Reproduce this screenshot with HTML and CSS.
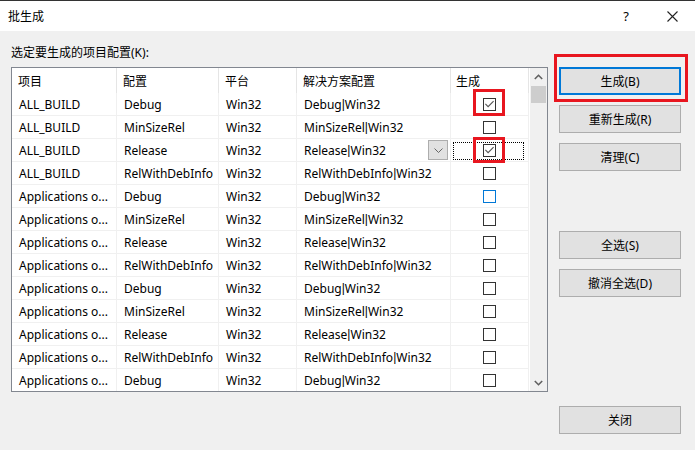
FILE: index.html
```html
<!DOCTYPE html>
<html lang="zh-CN">

<head>
    <meta charset="UTF-8">
    <title>批生成</title>
    <link rel="stylesheet" href="styles.css">
</head>

<body>
    <div class="window">
        <!-- Title bar -->
        <div class="titlebar">
            <span class="title">批生成</span>
            <span class="help">?</span>
            <span class="close">
                <svg width="11" height="11" viewBox="0 0 11 11"><path d="M0.5 0.5 L10.5 10.5 M10.5 0.5 L0.5 10.5" stroke="#222" stroke-width="1.1" fill="none"/></svg>
            </span>
        </div>

        <div class="content">
            <div class="left">
                <div class="label">选定要生成的项目配置(K):</div>

                <div class="listbox">
                    <div class="grid">
                        <div class="row header">
                            <div class="cell c1">项目</div>
                            <div class="cell c2">配置</div>
                            <div class="cell c3">平台</div>
                            <div class="cell c4">解决方案配置</div>
                            <div class="cell c5">生成</div>
                        </div>

                        <div class="row">
                            <div class="cell c1">ALL_BUILD</div>
                            <div class="cell c2">Debug</div>
                            <div class="cell c3">Win32</div>
                            <div class="cell c4">Debug<span class="sep">|</span>Win32</div>
                            <div class="cell c5">
                                <span class="check"><svg width="11" height="11" viewBox="0 0 11 11"><path d="M1.4 4.9 L4.1 7.6 L9.6 2.1" stroke="#555" stroke-width="1.1" fill="none"/></svg></span>
                                <span class="mark mark-a"></span>
                            </div>
                        </div>
                        <div class="row">
                            <div class="cell c1">ALL_BUILD</div>
                            <div class="cell c2">MinSizeRel</div>
                            <div class="cell c3">Win32</div>
                            <div class="cell c4">MinSizeRel<span class="sep">|</span>Win32</div>
                            <div class="cell c5"><span class="check"></span></div>
                        </div>
                        <div class="row">
                            <div class="cell c1">ALL_BUILD</div>
                            <div class="cell c2">Release</div>
                            <div class="cell c3">Win32</div>
                            <div class="cell c4">Release<span class="sep">|</span>Win32
                                <span class="combo">
                                    <svg width="9" height="5" viewBox="0 0 9 5"><path d="M0.5 0.5 L4.5 4.5 L8.5 0.5" stroke="#666" fill="none"/></svg>
                                </span>
                            </div>
                            <div class="cell c5">
                                <span class="focus"></span>
                                <span class="check"><svg width="11" height="11" viewBox="0 0 11 11"><path d="M1.4 4.9 L4.1 7.6 L9.6 2.1" stroke="#555" stroke-width="1.1" fill="none"/></svg></span>
                                <span class="mark mark-b"></span>
                            </div>
                        </div>
                        <div class="row">
                            <div class="cell c1">ALL_BUILD</div>
                            <div class="cell c2">RelWithDebInfo</div>
                            <div class="cell c3">Win32</div>
                            <div class="cell c4">RelWithDebInfo<span class="sep">|</span>Win32</div>
                            <div class="cell c5"><span class="check"></span></div>
                        </div>
                        <div class="row">
                            <div class="cell c1">Applications o...</div>
                            <div class="cell c2">Debug</div>
                            <div class="cell c3">Win32</div>
                            <div class="cell c4">Debug<span class="sep">|</span>Win32</div>
                            <div class="cell c5"><span class="check hover"></span></div>
                        </div>
                        <div class="row">
                            <div class="cell c1">Applications o...</div>
                            <div class="cell c2">MinSizeRel</div>
                            <div class="cell c3">Win32</div>
                            <div class="cell c4">MinSizeRel<span class="sep">|</span>Win32</div>
                            <div class="cell c5"><span class="check"></span></div>
                        </div>
                        <div class="row">
                            <div class="cell c1">Applications o...</div>
                            <div class="cell c2">Release</div>
                            <div class="cell c3">Win32</div>
                            <div class="cell c4">Release<span class="sep">|</span>Win32</div>
                            <div class="cell c5"><span class="check"></span></div>
                        </div>
                        <div class="row">
                            <div class="cell c1">Applications o...</div>
                            <div class="cell c2">RelWithDebInfo</div>
                            <div class="cell c3">Win32</div>
                            <div class="cell c4">RelWithDebInfo<span class="sep">|</span>Win32</div>
                            <div class="cell c5"><span class="check"></span></div>
                        </div>
                        <div class="row">
                            <div class="cell c1">Applications o...</div>
                            <div class="cell c2">Debug</div>
                            <div class="cell c3">Win32</div>
                            <div class="cell c4">Debug<span class="sep">|</span>Win32</div>
                            <div class="cell c5"><span class="check"></span></div>
                        </div>
                        <div class="row">
                            <div class="cell c1">Applications o...</div>
                            <div class="cell c2">MinSizeRel</div>
                            <div class="cell c3">Win32</div>
                            <div class="cell c4">MinSizeRel<span class="sep">|</span>Win32</div>
                            <div class="cell c5"><span class="check"></span></div>
                        </div>
                        <div class="row">
                            <div class="cell c1">Applications o...</div>
                            <div class="cell c2">Release</div>
                            <div class="cell c3">Win32</div>
                            <div class="cell c4">Release<span class="sep">|</span>Win32</div>
                            <div class="cell c5"><span class="check"></span></div>
                        </div>
                        <div class="row">
                            <div class="cell c1">Applications o...</div>
                            <div class="cell c2">RelWithDebInfo</div>
                            <div class="cell c3">Win32</div>
                            <div class="cell c4">RelWithDebInfo<span class="sep">|</span>Win32</div>
                            <div class="cell c5"><span class="check"></span></div>
                        </div>
                        <div class="row">
                            <div class="cell c1">Applications o...</div>
                            <div class="cell c2">Debug</div>
                            <div class="cell c3">Win32</div>
                            <div class="cell c4">Debug<span class="sep">|</span>Win32</div>
                            <div class="cell c5"><span class="check"></span></div>
                        </div>
                    </div>

                    <!-- Vertical scrollbar -->
                    <div class="scrollbar">
                        <div class="arrow">
                            <svg width="9" height="6" viewBox="0 0 9 6"><path d="M0.8 5 L4.5 1.3 L8.2 5" stroke="#606060" stroke-width="1.6" fill="none"/></svg>
                        </div>
                        <div class="thumb"></div>
                        <div class="track"></div>
                        <div class="arrow">
                            <svg width="9" height="6" viewBox="0 0 9 6"><path d="M0.8 1 L4.5 4.7 L8.2 1" stroke="#606060" stroke-width="1.6" fill="none"/></svg>
                        </div>
                    </div>
                </div>
            </div>

            <div class="buttons">
                <div class="btn-group">
                    <div class="mark-btn">
                        <button class="default">生成(B)</button>
                    </div>
                    <button>重新生成(R)</button>
                    <button>清理(C)</button>
                </div>
                <div class="btn-group select-group">
                    <button>全选(S)</button>
                    <button>撤消全选(D)</button>
                </div>
                <button class="close-btn">关闭</button>
            </div>
        </div>
    </div>
</body>

</html>
```

FILE: styles.css
```css
body {
    margin: 0;
    background-color: #f0f0f0;
    font-family: "Noto Sans", "Noto Sans CJK SC", sans-serif;
    font-size: 12px;
    color: #000;
}

.window {
    width: 695px;
    height: 450px;
    border-top: 1px solid #333;
    box-sizing: border-box;
    overflow: hidden;
}

/* Title bar */
.titlebar {
    height: 30px;
    background-color: #fff;
    display: flex;
    align-items: center;
    padding-left: 8px;
}

.titlebar .title {
    flex: 1;
    font-size: 12px;
}

.titlebar .help {
    width: 46px;
    text-align: center;
    font-size: 13px;
}

.titlebar .close {
    width: 46px;
    display: flex;
    justify-content: center;
}

/* Main area */
.content {
    display: flex;
    padding: 0 0 0 11px;
}

.left {
    width: 537px;
}

.label {
    height: 17px;
    margin-top: 13px;
    margin-bottom: 6px;
    line-height: 17px;
}

.listbox {
    display: flex;
    height: 325px;
    border: 1px solid #828790;
    background-color: #fff;
    box-sizing: border-box;
    overflow: hidden;
}

.grid {
    width: 517px;
}

.row {
    display: flex;
    height: 23px;
    border-bottom: 1px solid #f0f0f0;
    box-sizing: border-box;
}

.row.header {
    height: 25px;
    border-bottom: none;
}

.cell {
    display: flex;
    align-items: center;
    padding-left: 7px;
    border-right: 1px solid #f0f0f0;
    box-sizing: border-box;
    white-space: nowrap;
    overflow: hidden;
    position: relative;
}

.header .cell {
    border-right-color: #e5e5e5;
    padding-left: 6px;
}

/* narrower bar glyph, like the dialog font */
.sep {
    font-family: "Liberation Sans", sans-serif;
}

.c1 { width: 105px; }
.c2 { width: 102px; }
.c3 { width: 78px; }
.c4 { width: 154px; padding-right: 2px; }
.c5 { width: 78px; justify-content: center; padding-left: 0; overflow: visible; }

.header .c5 {
    justify-content: flex-start;
    padding-left: 5px;
}

.combo {
    margin-left: auto;
    width: 18px;
    height: 18px;
    background-color: #e1e1e1;
    border: 1px solid #adadad;
    display: flex;
    align-items: center;
    justify-content: center;
}

.check {
    width: 13px;
    height: 13px;
    border: 1px solid #333;
    box-sizing: border-box;
    background-color: #fff;
    display: flex;
    margin-top: 1px;
}

.check.hover {
    border-color: #0078d7;
}

/* Focus rectangle */
.focus {
    position: absolute;
    left: 2px;
    top: 3px;
    width: 71px;
    height: 18px;
    border: 1px dotted #000;
    box-sizing: border-box;
}

/* Red annotation boxes */
.mark {
    position: absolute;
    left: 22px;
    width: 32px;
    border: 3px solid #e8161f;
    box-sizing: border-box;
    pointer-events: none;
}

.mark-a {
    top: -4px;
    height: 27px;
}

.mark-b {
    top: -2px;
    height: 26px;
}

/* Scrollbar */
.scrollbar {
    width: 18px;
    display: flex;
    flex-direction: column;
    align-items: center;
    background-color: #f0f0f0;
    border-left: 1px solid #fff;
}

.scrollbar .arrow {
    height: 17px;
    width: 100%;
    display: flex;
    align-items: center;
    justify-content: center;
}

.scrollbar .thumb {
    width: 15px;
    height: 17px;
    background-color: #cdcdcd;
    margin-top: 1px;
}

.scrollbar .track {
    flex: 1;
}

/* Buttons */
.buttons {
    display: flex;
    flex-direction: column;
    padding-left: 11px;
    margin-top: 36px;
}

.btn-group {
    display: flex;
    flex-direction: column;
    gap: 10px;
}

.select-group {
    margin-top: 60px;
}

button {
    width: 122px;
    height: 28px;
    background-color: #e1e1e1;
    border: 1px solid #adadad;
    font-family: "Noto Sans", "Noto Sans CJK SC", sans-serif;
    font-size: 12px;
    color: #000;
    padding: 0;
}

button.default {
    border: 2px solid #0078d7;
}

.mark-btn {
    position: relative;
}

.mark-btn::after {
    content: "";
    position: absolute;
    left: -5px;
    top: -13px;
    width: 134px;
    height: 48px;
    border: 3px solid #e8161f;
    box-sizing: border-box;
}

.close-btn {
    margin-top: 109px;
}
```
